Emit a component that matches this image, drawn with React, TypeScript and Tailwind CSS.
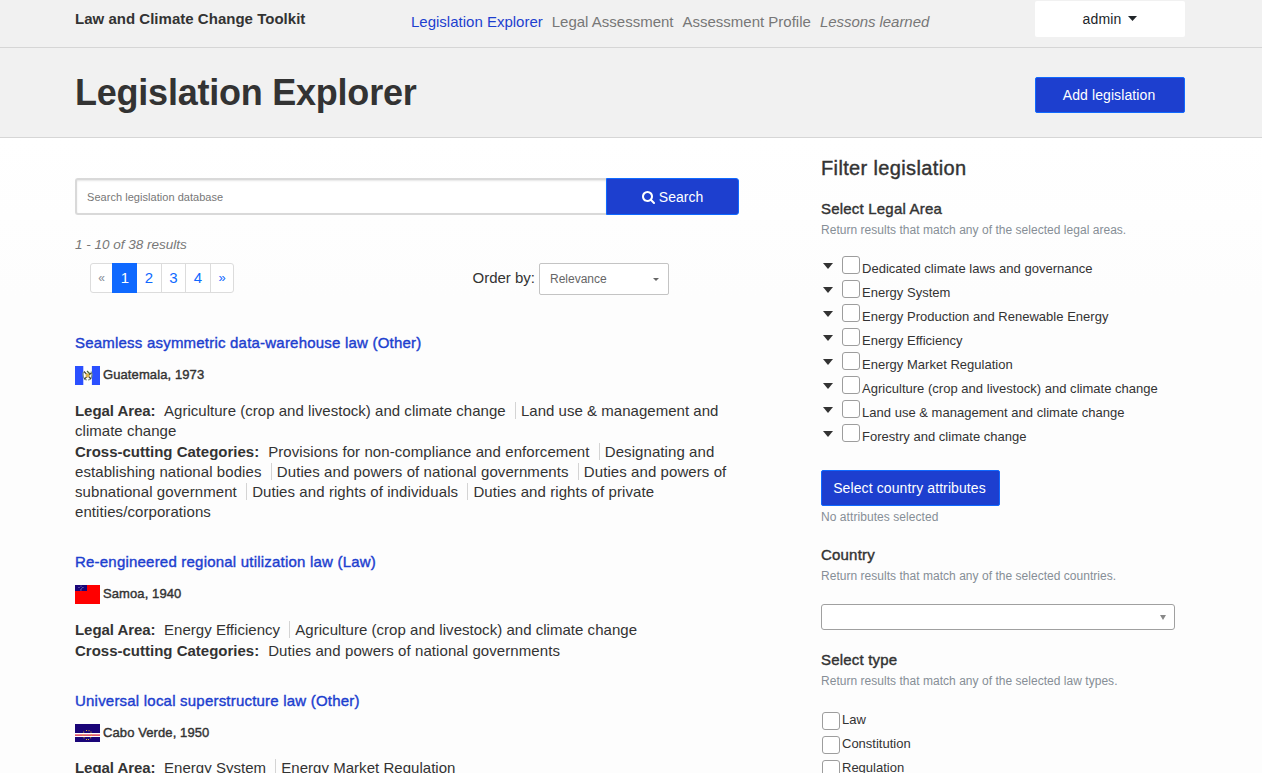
import type { ReactNode } from "react";

const medium = "[-webkit-text-stroke:0.4px_currentColor]";

function Caret({ className }: { className: string }) {
  return (
    <svg viewBox="0 0 10 5" preserveAspectRatio="none" className={className} fill="currentColor" aria-hidden="true">
      <path d="M0 0h10L5 5z" />
    </svg>
  );
}

function SearchIcon() {
  return (
    <svg viewBox="0 128 1664 1664" className="size-[13px]" fill="currentColor" aria-hidden="true">
      <path d="M1152 832q0-185-131.500-316.500t-316.500-131.500-316.500 131.500-131.500 316.500 131.500 316.500 316.500 131.500 316.500-131.500 131.500-316.500zm512 832q0 52-38 90t-90 38q-54 0-90-38l-343-342q-179 124-399 124-143 0-273.500-55.500t-225-150-150-225-55.500-273.500 55.500-273.500 150-225 225-150 273.500-55.500 273.500 55.500 225 150 150 225 55.500 273.500q0 220-124 399l343 343q37 37 37 90z" />
    </svg>
  );
}

function GuatemalaFlag() {
  return (
    <svg viewBox="0 0 25 19" className="h-[19px] w-[25px]">
      <rect width="25" height="19" fill="#fff" />
      <rect width="8.3" height="19" fill="#2b50ff" />
      <rect x="16.9" width="8.1" height="19" fill="#2b50ff" />
      <path d="M8.400 6c-1.400 3 .2 7.500 3.400 8M16 5.500c2.200 3 .6 8-3 8.500" fill="none" stroke="#7f957f" strokeWidth="1.2" />
      <path d="M9 5.500l7 7.500M16.300 7l-7 6" stroke="#3f3f30" strokeWidth="1.100" />
      <rect x="10.700" y="7.500" width="3.500" height="3.800" fill="#d9b44a" />
      <path d="M12 5l3 3" stroke="#4b6a30" strokeWidth="1.200" />
    </svg>
  );
}

function SamoaFlag() {
  return (
    <svg viewBox="0 0 25 19" className="h-[19px] w-[25px]">
      <rect width="25" height="19" fill="#f00" />
      <rect width="12" height="6" fill="#1a0578" />
      <g fill="#8d84c4">
        <rect x="5.500" y="0.600" width="1" height="1" />
        <rect x="3.500" y="2" width="1" height="1" />
        <rect x="7.400" y="2" width="1" height="1" />
        <rect x="6.300" y="3" width="0.800" height="0.800" />
        <rect x="5.300" y="4.300" width="1.200" height="1.200" />
      </g>
    </svg>
  );
}

function CaboVerdeFlag() {
  return (
    <svg viewBox="0 0 25 18" className="h-[18px] w-[25px]">
      <rect width="25" height="18" fill="#1a0578" />
      <rect y="9" width="25" height="4" fill="#fff" />
      <rect y="10.500" width="25" height="1.200" fill="#d01028" />
      <g fill="#e3b02c">
        <rect x="11" y="6" width="1" height="1" />
        <rect x="13.500" y="6.200" width="1" height="1" />
        <rect x="8.200" y="7.600" width="1" height="1" />
        <rect x="15.500" y="7.600" width="1" height="1" />
        <rect x="7.300" y="10.500" width="1" height="1" />
        <rect x="16" y="10.500" width="1" height="1" />
        <rect x="8.500" y="13.300" width="1" height="1" />
        <rect x="15.200" y="13.300" width="1" height="1" />
        <rect x="11" y="15" width="1" height="1" />
        <rect x="13" y="15" width="1" height="1" />
      </g>
    </svg>
  );
}

function Tags({ label, items, className, labelClass }: { label: string; items: string[]; className: string; labelClass: string }) {
  return (
    <div className={`pb-px text-[15px] leading-5 ${className}`}>
      <b className={labelClass}>{label}</b>
      {items.map((item, i) => (
        <span key={item}>
          {i > 0 && <span className="ml-[5px] border-l border-[#d4d4d4] pl-[5px]" />}
          {item}{" "}
        </span>
      ))}
    </div>
  );
}

type Law = { title: string; flag: ReactNode; place: string; areas: string[]; categories: string[] };

const laws: Law[] = [
  {
    title: "Seamless asymmetric data-warehouse law (Other)",
    flag: <GuatemalaFlag />,
    place: "Guatemala, 1973",
    areas: ["Agriculture (crop and livestock) and climate change", "Land use & management and climate change"],
    categories: [
      "Provisions for non-compliance and enforcement",
      "Designating and establishing national bodies",
      "Duties and powers of national governments",
      "Duties and powers of subnational government",
      "Duties and rights of individuals",
      "Duties and rights of private entities/corporations",
    ],
  },
  {
    title: "Re-engineered regional utilization law (Law)",
    flag: <SamoaFlag />,
    place: "Samoa, 1940",
    areas: ["Energy Efficiency", "Agriculture (crop and livestock) and climate change"],
    categories: ["Duties and powers of national governments"],
  },
  {
    title: "Universal local superstructure law (Other)",
    flag: <CaboVerdeFlag />,
    place: "Cabo Verde, 1950",
    areas: ["Energy System", "Energy Market Regulation"],
    categories: [],
  },
];

const legalAreas = [
  "Dedicated climate laws and governance",
  "Energy System",
  "Energy Production and Renewable Energy",
  "Energy Efficiency",
  "Energy Market Regulation",
  "Agriculture (crop and livestock) and climate change",
  "Land use & management and climate change",
  "Forestry and climate change",
];

const types = ["Law", "Constitution", "Regulation"];

function Box() {
  return <span className="size-[18px] shrink-0 rounded-[3px] border border-[#9d9d9d] bg-white" />;
}

function FilterHead({ title, help }: { title: string; help: string }) {
  return (
    <>
      <h3 className={`text-[15px] leading-5 tracking-[0.2px] ${medium}`}>{title}</h3>
      <p className="mt-px text-[12px] leading-5 tracking-[0.03px] text-[#868e96]">{help}</p>
    </>
  );
}

export default function App() {
  return (
    <div className="h-[773px] overflow-hidden bg-[#fdfdfd] font-['Liberation_Sans',Arial,sans-serif] text-[#333]">
      <header className="h-12 border-b border-[#d6d6d6] bg-[#f1f1f1] pr-[77px] pl-[75px]">
        <div className="flex items-start">
          <div className="w-[336px] pt-[9px] text-[15px] leading-5 font-bold tracking-[0.02px]">
            Law and Climate Change Toolkit
          </div>
          <nav className="flex gap-[9px] pt-3 text-[15px] leading-5 text-[#777]">
            <a className="text-[#1d3fcf]">Legislation Explorer</a>
            <a>Legal Assessment</a>
            <a>Assessment Profile</a>
            <a className="tracking-[-0.05px] italic">Lessons learned</a>
          </nav>
          <button className="mt-px ml-auto flex h-9 w-[150px] items-center justify-center gap-[7px] rounded-[2px] bg-white text-[14px] tracking-[0.15px] text-[#212529]">
            admin <Caret className="mb-[2px] h-[5px] w-[9px]" />
          </button>
        </div>
      </header>

      <section className="flex h-[90px] items-start justify-between border-b border-[#d6d6d6] bg-[#f1f1f1] pr-[77px] pl-[75px]">
        <h1 className="pt-[23px] text-[36px] leading-[44px] font-bold tracking-[-0.23px]">Legislation Explorer</h1>
        <button className="mt-[29px] h-9 w-[150px] rounded-[2px] border border-[#0f69ff] bg-[#1d3fcf] pr-[2px] text-[14px] tracking-[0.1px] text-white">
          Add legislation
        </button>
      </section>

      <main className="flex h-[635px] bg-linear-to-b from-white to-[#fdfdfd] to-25% pl-[75px]">
        <div className="w-[664px] shrink-0 pt-10">
          <div className="flex h-[37px]">
            <div className="flex flex-1 items-center rounded-l-[3px] border-2 border-r-0 border-[#d9d9d9] bg-white pt-px pl-[10px] text-[11px] tracking-[0.04px] text-[#777] shadow-[inset_0_1px_2px_#0000001a]">
              Search legislation database
            </div>
            <button className="flex w-[133px] items-center justify-center gap-1 rounded-r-[3px] border border-[#0f69ff] bg-[#1d3fcf] pt-[2px] text-[14px] text-white">
              <SearchIcon /> Search
            </button>
          </div>
          <p className="mt-5 text-[13.5px] leading-5 text-[#777] italic">1 - 10 of 38 results</p>
          <div className="mt-2 flex items-start">
            <div className="ml-[15px] flex h-[30px] w-36 rounded-[3px] border border-[#dcdcdc] bg-white text-[15px] leading-7 text-[#0f69ff]">
              <span className="w-[21px] text-center text-[12px] text-[#868e96]">«</span>
              <span className="-my-px w-[25px] bg-[#0f69ff] pl-px text-center leading-[30px] text-white">1</span>
              <span className="w-[25px] border-r border-[#dcdcdc] text-center">2</span>
              <span className="w-6 border-r border-[#dcdcdc] text-center">3</span>
              <span className="w-[25px] border-r border-[#dcdcdc] text-center">4</span>
              <span className="flex-1 text-center text-[13px]">»</span>
            </div>
            <span className="ml-auto pt-[5px] pr-1 text-[15px] leading-5">Order by:</span>
            <div className="mr-[70px] flex h-8 w-[130px] items-center justify-between rounded-[2px] border border-[#c4c4c4] bg-white pr-[9px] pl-[10px] text-[12px] text-[#666]">
              Relevance <Caret className="h-[3px] w-[6px]" />
            </div>
          </div>

          <div className="mt-[38px]">
            {laws.map((law) => (
              <article key={law.title} className="mb-[29px]">
                <h2 className={`text-[15px] leading-5 tracking-[0.21px] text-[#1d3fcf] ${medium}`}>{law.title}</h2>
                <div className="mt-[13px] mb-4 flex items-start gap-[3px]">
                  {law.flag}
                  <span className={`text-[13px] leading-[18px] tracking-[0.1px] ${medium}`}>{law.place}</span>
                </div>
                <Tags label="Legal Area:" className="tracking-[0.03px]" labelClass="mr-[8.5px] tracking-[-0.06px]" items={law.areas} />
                {law.categories.length > 0 && (
                  <Tags
                    label="Cross-cutting Categories:"
                    className="tracking-[0.08px]"
                    labelClass="mr-[9px] tracking-normal"
                    items={law.categories}
                  />
                )}
              </article>
            ))}
          </div>
        </div>

        <aside className="ml-[82px] w-[354px] pt-[18px]">
          <h2 className={`text-[20px] leading-6 tracking-[0.36px] ${medium}`}>Filter legislation</h2>
          <div className="mt-[19px]">
            <FilterHead title="Select Legal Area" help="Return results that match any of the selected legal areas." />
          </div>
          <ul className="mt-4 text-[13px] tracking-[0.02px]">
            {legalAreas.map((area) => (
              <li key={area} className="flex h-6 items-start">
                <Caret className="mt-[7px] ml-[2px] h-[6px] w-[10px]" />
                <span className="ml-[9px] flex items-start gap-[2px]">
                  <Box />
                  <span className="pt-[3px] leading-5">{area}</span>
                </span>
              </li>
            ))}
          </ul>
          <button className="mt-[22px] block h-9 w-[179px] rounded-[2px] border border-[#0f69ff] bg-[#1d3fcf] pr-[2px] text-[14px] tracking-[0.1px] whitespace-nowrap text-white">
            Select country attributes
          </button>
          <p className="mt-px text-[12px] leading-5 tracking-[0.06px] text-[#868e96]">No attributes selected</p>
          <div className="mt-[18px]">
            <FilterHead title="Country" help="Return results that match any of the selected countries." />
          </div>
          <div className="mt-[18px] flex h-[26px] items-center justify-end rounded-[3px] border border-[#a0a0a0] bg-white pr-2">
            <Caret className="h-[5px] w-[6px] text-[#888]" />
          </div>
          <div className="mt-5">
            <FilterHead title="Select type" help="Return results that match any of the selected law types." />
          </div>
          <ul className="mt-[19px] pl-px text-[13px]">
            {types.map((type) => (
              <li key={type} className="flex h-6 items-start gap-[2px]">
                <span className="flex pt-[2px]">
                  <Box />
                </span>
                <span className="leading-5">{type}</span>
              </li>
            ))}
          </ul>
        </aside>
      </main>
    </div>
  );
}
